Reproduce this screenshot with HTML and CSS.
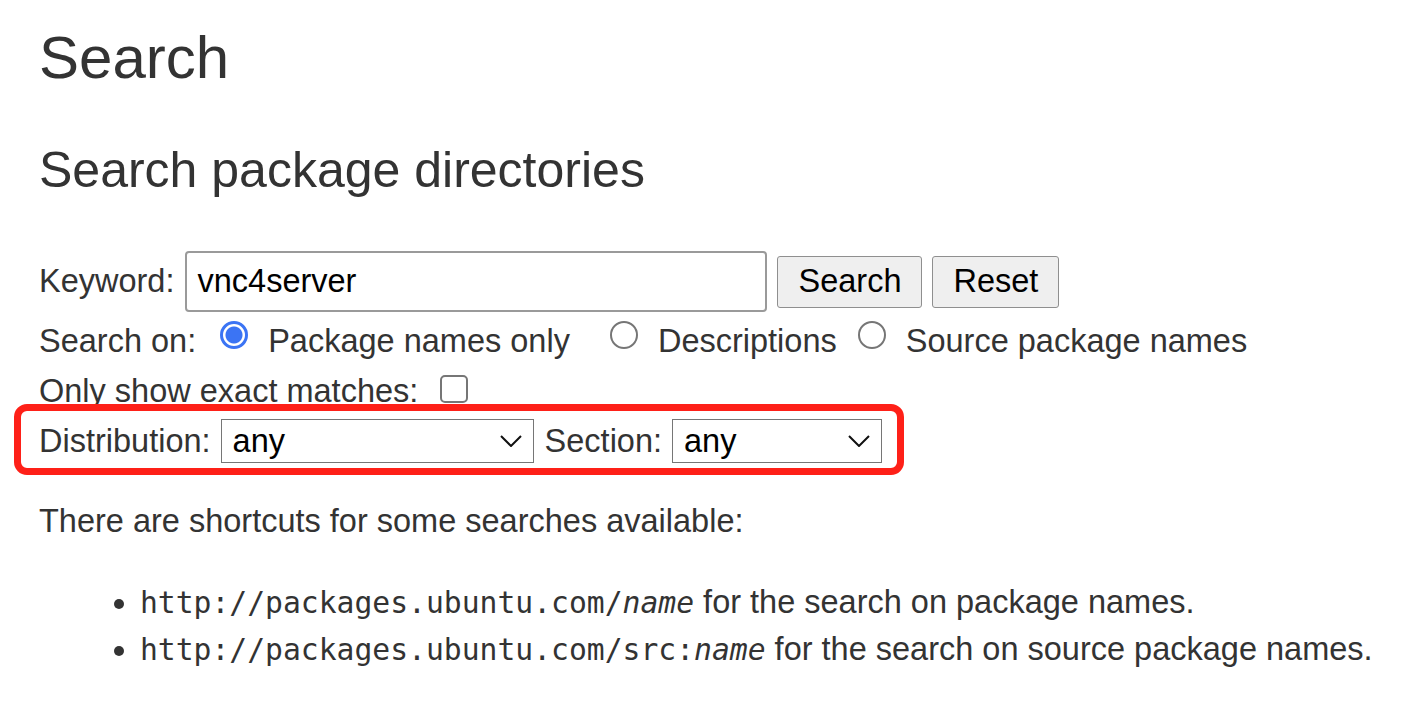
FILE: index.html
```html
<!DOCTYPE html>
<html lang="en">
<head>
<meta charset="utf-8">
<title>Search</title>
<link rel="stylesheet" href="styles.css">
</head>
<body>
<div class="page">
  <h1 class="title">Search</h1>
  <h2 class="subtitle">Search package directories</h2>
  <form class="search-form">
    <div class="row row-keyword">
      <label class="lbl" for="kw">Keyword:</label>
      <input id="kw" class="text-input" type="text" value="vnc4server">
      <button type="button" class="btn btn-search">Search</button>
      <button type="button" class="btn btn-reset">Reset</button>
    </div>
    <div class="row row-searchon">
      <span class="lbl">Search on:</span>
      <input type="radio" name="searchon" class="radio radio-first" checked>
      <span class="opt">Package names only</span>
      <input type="radio" name="searchon" class="radio radio-second">
      <span class="opt">Descriptions</span>
      <input type="radio" name="searchon" class="radio radio-third">
      <span class="opt">Source package names</span>
    </div>
    <div class="row row-exact">
      <span class="lbl">Only show exact matches:</span>
      <input type="checkbox" class="check">
    </div>
    <div class="row row-dist">
      <span class="lbl">Distribution:</span>
      <span class="select-wrap select-dist">
        <select class="select"><option>any</option></select>
        <svg class="chevron" width="22" height="12" viewBox="0 0 22 12"><path d="M1 1 L11 11 L21 1" fill="none" stroke="#111" stroke-width="2"/></svg>
      </span>
      <span class="lbl lbl-section">Section:</span>
      <span class="select-wrap select-section">
        <select class="select"><option>any</option></select>
        <svg class="chevron" width="22" height="12" viewBox="0 0 22 12"><path d="M1 1 L11 11 L21 1" fill="none" stroke="#111" stroke-width="2"/></svg>
      </span>
    </div>
  </form>
  <p class="shortcuts">There are shortcuts for some searches available:</p>
  <ul class="shortcut-list">
    <li><code class="url">http://packages.ubuntu.com/<em>name</em></code> for the search on package names.</li>
    <li><code class="url">http://packages.ubuntu.com/src:<em>name</em></code> for the search on source package names.</li>
  </ul>
  <div class="highlight"></div>
</div>
</body>
</html>
```
FILE: styles.css
```css
html, body {
  margin: 0;
  padding: 0;
  background: #ffffff;
}

body {
  font-family: "Liberation Sans", Arial, sans-serif;
  font-size: 32.5px;
  color: #333333;
}

.page {
  position: relative;
  padding: 23px 0 0 39px;
}

.title {
  margin: 0;
  font-size: 60px;
  font-weight: normal;
  line-height: normal;
}

.subtitle {
  margin: 49px 0 0;
  font-size: 50px;
  font-weight: normal;
  line-height: normal;
}

.search-form {
  margin-top: 52px;
}

.row {
  display: flex;
  align-items: center;
}

.lbl {
  line-height: normal;
}

.row-keyword {
  height: 61px;
}

.text-input {
  box-sizing: border-box;
  width: 582px;
  height: 61px;
  margin: 0 0 0 11px;
  padding: 0 0 0 10px;
  border: 2px solid #9a9a9a;
  border-radius: 4px;
  font-family: "Liberation Sans", Arial, sans-serif;
  font-size: 32.5px;
  color: #000000;
  background: #ffffff;
  outline: none;
}

.btn {
  box-sizing: border-box;
  height: 52px;
  padding: 0 20px;
  border: 1px solid #8f8f8f;
  border-radius: 3px;
  background: #efefef;
  color: #000000;
  font-family: "Liberation Sans", Arial, sans-serif;
  font-size: 32.5px;
  margin: 0 0 0 10px;
}

.row-searchon {
  align-items: flex-start;
  margin-top: 11px;
}

.radio {
  -webkit-appearance: none;
  appearance: none;
  box-sizing: border-box;
  width: 28px;
  height: 28px;
  margin: -2px 0 0 0;
  border: 2px solid #767676;
  border-radius: 50%;
  background: #ffffff;
  flex: none;
}

.radio:checked {
  border: 3px solid #3b74f4;
  background: radial-gradient(circle, #3b74f4 0, #3b74f4 8px, #ffffff 9px);
}

.radio-first { margin-left: 24px; }
.radio-second { margin-left: 40px; }
.radio-third { margin-left: 21px; }

.opt {
  margin-left: 20px;
  line-height: normal;
}

.row-exact {
  align-items: flex-start;
  margin-top: 13px;
}

.check {
  -webkit-appearance: none;
  appearance: none;
  box-sizing: border-box;
  width: 28px;
  height: 28px;
  margin: 2px 0 0 22px;
  border: 2px solid #767676;
  border-radius: 5px;
  background: #ffffff;
  flex: none;
}

.row-dist {
  height: 44px;
  margin-top: 9px;
}

.select-wrap {
  position: relative;
  display: block;
  margin-left: 10px;
}

.select {
  -webkit-appearance: none;
  appearance: none;
  box-sizing: border-box;
  height: 44px;
  margin: 0;
  padding: 0 0 0 11px;
  border: 1px solid #767676;
  border-radius: 0;
  background: #ffffff;
  color: #000000;
  font-family: "Liberation Sans", Arial, sans-serif;
  font-size: 32.5px;
  display: block;
  outline: none;
}

.select-dist .select { width: 313px; }
.select-section .select { width: 210px; }

.chevron {
  position: absolute;
  right: 12px;
  top: 16px;
  pointer-events: none;
}

.lbl-section {
  margin-left: 11px;
}

.shortcuts {
  margin: 40px 0 0;
  line-height: normal;
}

.shortcut-list {
  margin: 39px 0 0;
  padding-left: 101px;
}

.shortcut-list li {
  line-height: 47px;
}

.url {
  font-family: "DejaVu Sans Mono", "Liberation Mono", monospace;
  font-size: 29.7px;
}

.url em {
  font-style: italic;
}

.highlight {
  position: absolute;
  left: 14px;
  top: 404px;
  width: 890px;
  height: 71px;
  box-sizing: border-box;
  border: 7px solid #fe2018;
  border-radius: 13px;
  pointer-events: none;
}
```
